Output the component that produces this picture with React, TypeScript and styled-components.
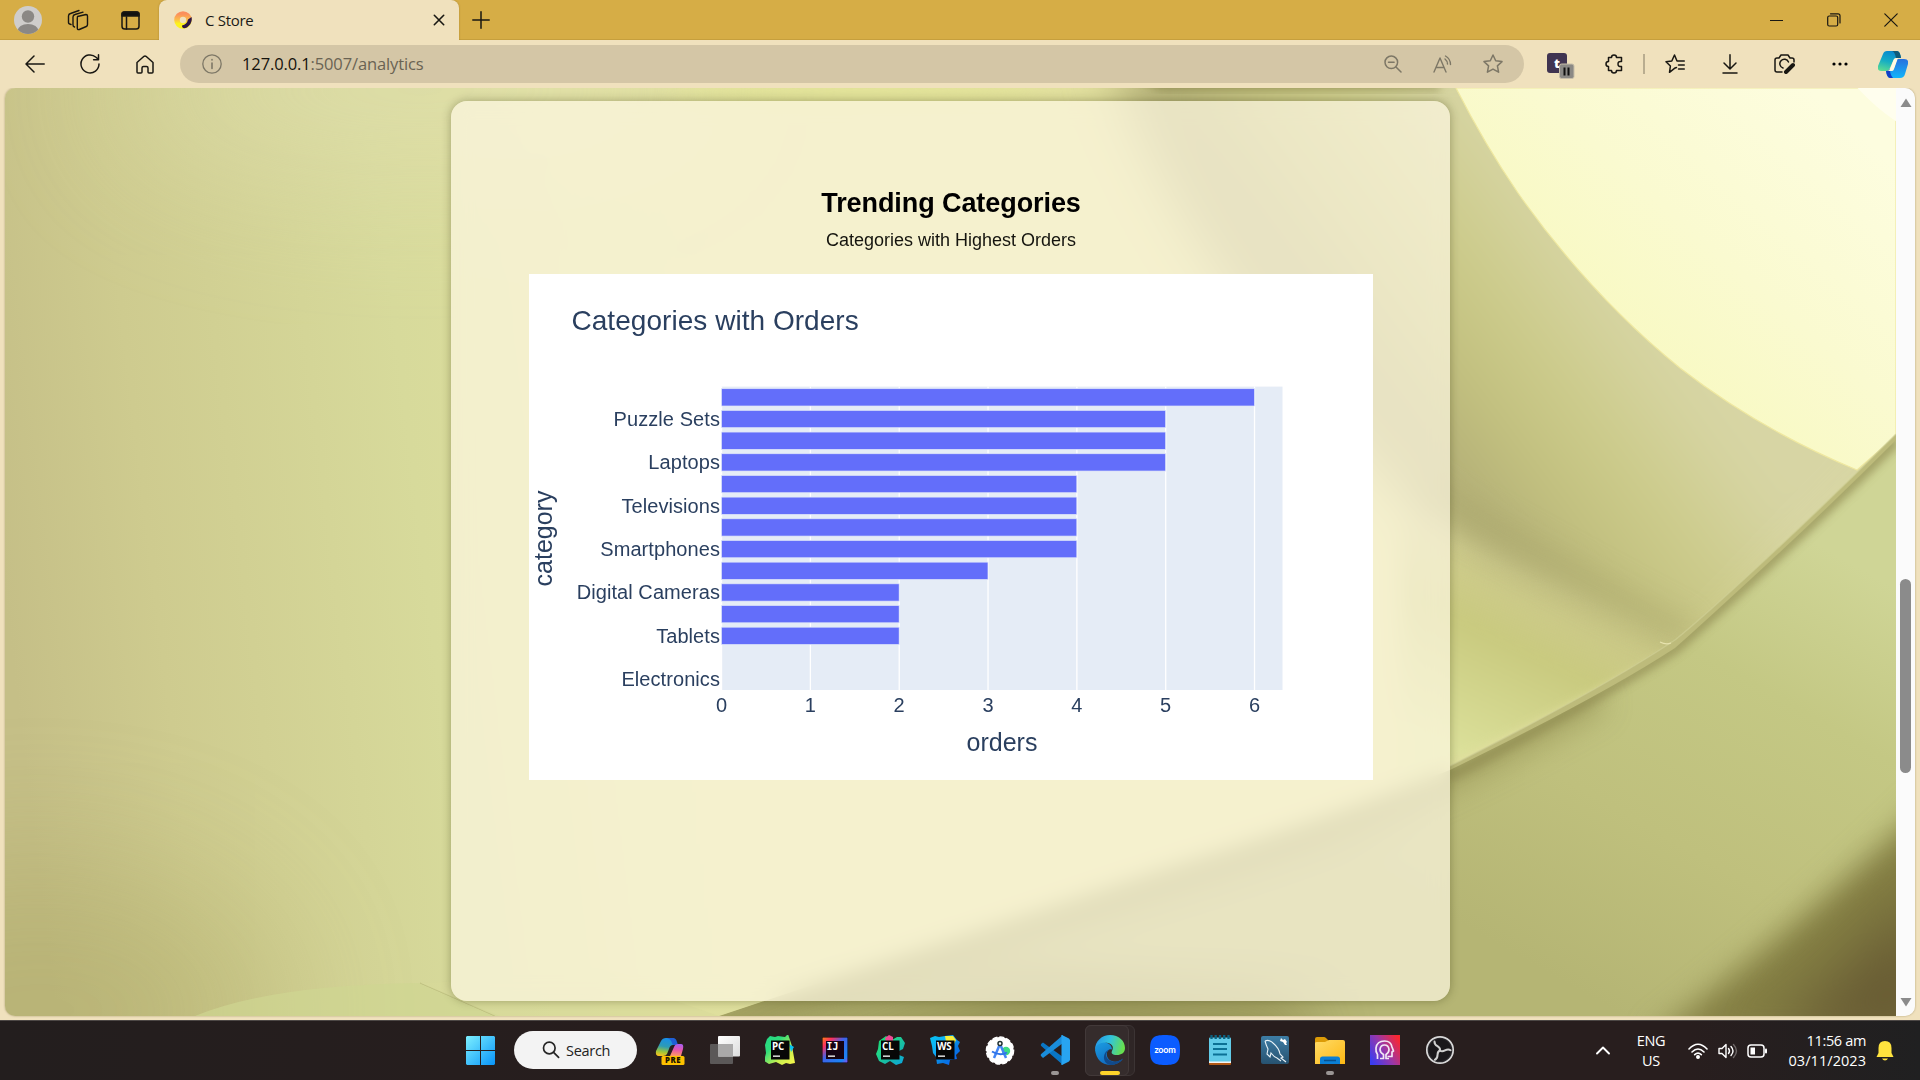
import React from "react";
import styled, { createGlobalStyle } from "styled-components";

const GlobalStyle = createGlobalStyle`
  * { box-sizing: border-box; }
  html, body { margin: 0; padding: 0; overflow: hidden; }
  body { font-family: "Open Sans", "Noto Sans", sans-serif; color: #1b1a17; }
  svg { display: block; flex: none; }
`;

const Desktop = styled.div`
  width: 1920px;
  height: 1080px;
  display: grid;
  grid-template-rows: 1020px 60px;
`;

const Browser = styled.div`
  display: grid;
  grid-template-rows: 40px 48px 928px 4px;
  background: #f0e1bd;
`;

const TitleBar = styled.div`
  display: flex;
  background: #d6ad46;
  box-shadow: inset 0 -1px 0 #c69f3d;
`;

const Slot = styled.div<{ $w: number; $shift?: number }>`
  width: ${(p) => p.$w}px;
  flex: none;
  display: flex;
  align-items: center;
  justify-content: center;
  padding-left: ${(p) => p.$shift ?? 0}px;
`;

const Tab = styled.div`
  width: 300px;
  margin-left: 1px;
  height: 40px;
  display: flex;
  align-items: center;
  padding: 0 14px 0 15px;
  border-radius: 8px 8px 0 0;
  background: #f0e1bd;
  box-shadow: 0 0 2px rgba(100, 70, 0, 0.4);
`;

const TabTitle = styled.span`
  flex: 1;
  margin-left: 13px;
  font-size: 15px;
  letter-spacing: -0.3px;
  line-height: 38px;
`;

const Spacer = styled.div`
  flex: 1;
`;

const ToolBar = styled.div`
  display: flex;
  align-items: stretch;
  padding: 0 0 0 7.5px;
  background: #f0e1bd;
  position: relative;
  z-index: 1;
`;

const AddressBar = styled.div`
  width: 1344px;
  height: 38px;
  margin: 5px 9px 0 7.5px;
  padding: 0 6.5px 0 21.5px;
  display: flex;
  align-items: stretch;
  border-radius: 19px;
  background: #d4c6a6;
`;

const Url = styled.span`
  flex: 1;
  margin-left: 19.5px;
  font-size: 16.5px;
  letter-spacing: -0.12px;
  line-height: 37px;
  color: #6a6353;
  b { font-weight: 400; color: #14120c; }
`;

const Divider = styled.div`
  width: 2px;
  height: 20px;
  margin: 14px 2.2px 0;
  background: #b9ad90;
`;

const Viewport = styled.main`
  margin: 0 5px;
  display: grid;
  grid-template-columns: 1891px 19px;
  border-radius: 10px;
  overflow: hidden;
  box-shadow: 0 0 2px rgba(90, 75, 30, 0.5);
`;

const Page = styled.div`
  display: grid;
  overflow: hidden;
  & > * { grid-area: 1 / 1; }
`;

const Card = styled.section`
  width: 999px;
  height: 900px;
  margin: 13px 0 0 446px;
  padding: 86px 77px 0 78px;
  border-radius: 16px;
  background: rgba(254, 248, 227, 0.7);
  backdrop-filter: blur(10px);
  box-shadow: 0 0 10px rgba(50, 50, 10, 0.36);
  display: flex;
  flex-direction: column;
  align-items: center;
  font-family: "Liberation Sans", Arial, sans-serif;
  color: #000;
`;

const Heading = styled.h2`
  margin: 0;
  font-size: 27px;
  letter-spacing: -0.08px;
  line-height: 32px;
  font-weight: 700;
`;

const SubHeading = styled.p`
  margin: 10px 0 0;
  font-size: 18px;
  line-height: 22px;
  color: #14140e;
`;

const ChartBox = styled.div`
  width: 844px;
  height: 506px;
  margin-top: 23px;
  background: #fff;
`;

const ScrollBar = styled.div`
  display: flex;
  flex-direction: column;
  align-items: center;
  background: #fbfbfb;
  padding: 10px 0 9px;
`;

const Thumb = styled.div`
  width: 11px;
  height: 194px;
  border-radius: 6px;
  background: #8b8b8b;
  margin: 471px 0 auto;
`;

const TaskBar = styled.footer`
  display: flex;
  align-items: stretch;
  padding-left: 454px;
  background: linear-gradient(90deg, #231e1e, #281e1e 40%, #281e1e 88%, #202021);
  border-top: 1px solid #4d4846;
`;

const SearchPill = styled.div`
  width: 123px;
  height: 38px;
  margin: 10px 5.5px 0 7px;
  padding-left: 28px;
  display: flex;
  align-items: center;
  gap: 6px;
  border-radius: 19px;
  background: #f3f3f3;
  font-size: 14.5px;
  letter-spacing: -0.3px;
  color: #222;
`;

const Launcher = styled.div<{ $mark?: "open" | "active" }>`
  width: 55px;
  display: flex;
  flex-direction: column;
  align-items: center;
  padding-top: 14px;
  &::after {
    content: "";
    width: ${(p) => (p.$mark === "active" ? 20 : 8)}px;
    height: 4px;
    margin-top: 6px;
    border-radius: 2px;
    background: ${(p) => (p.$mark === "active" ? "#ffd42a" : p.$mark ? "#9a9594" : "transparent")};
  }
`;

const ActiveTile = styled.div`
  width: 50px;
  height: 51px;
  margin: 4px 0 0 2.5px;
  border-radius: 6px;
  background: #2f2626;
  border: 1px solid #3c3434;
  & > div {
    width: 44px;
    height: 51px;
    margin: -1px 0 0 -1px;
    padding: 9px 0 0 6px;
    border-radius: 6px;
    border: 1px solid #423939;
    background: #352c2c;
  }
`;

const Tray = styled.div`
  margin-left: auto;
  display: flex;
  align-items: center;
  padding: 0 26px 0 0;
  color: #fff;
  font-size: 14.5px;
  line-height: 20px;
  letter-spacing: -0.35px;
`;

const Lang = styled.div`
  width: 34px;
  margin: 0 20px 0 24px;
  text-align: center;
`;

const Clock = styled.div`
  width: 82px;
  margin: 0 10px 0 16px;
  text-align: right;
  white-space: nowrap;
`;

const DateLine = styled.div`
  letter-spacing: 0.05px;
`;

const Status = styled.div`
  display: flex;
  gap: 9.5px;
`;

const Stroke = styled.svg<{ $c?: string; $sw?: number }>`
  fill: none;
  stroke: ${(p) => p.$c ?? "#191712"};
  stroke-width: ${(p) => p.$sw ?? 1.5};
  stroke-linecap: round;
  stroke-linejoin: round;
`;

const grey = "#7d7766";
const STAR = "M10 1l2.7 5.8 6.3.8-4.6 4.3 1.2 6.3L10 15.1l-5.6 3.1 1.2-6.3L1 7.600l6.3-.8z";

function Backdrop() {
  return (
    <svg width="1891" height="928" viewBox="5 88 1891 928">
      <defs>
        <linearGradient id="base" gradientUnits="userSpaceOnUse" x1="5" y1="600" x2="1000" y2="480">
          <stop offset="0" stopColor="#c5bf87" />
          <stop offset=".15" stopColor="#cecb8f" />
          <stop offset=".42" stopColor="#d7da9b" />
          <stop offset=".6" stopColor="#dedf9d" />
          <stop offset="1" stopColor="#e1df9e" />
        </linearGradient>
        <linearGradient id="fold" gradientUnits="userSpaceOnUse" x1="1290" y1="270" x2="1490" y2="120">
          <stop offset="0" stopColor="#b3af77" />
          <stop offset=".3" stopColor="#c2c07f" />
          <stop offset=".6" stopColor="#cccb8b" />
          <stop offset="1" stopColor="#d7d5a4" />
        </linearGradient>
        <linearGradient id="sun" gradientUnits="userSpaceOnUse" x1="1580" y1="330" x2="1800" y2="80">
          <stop offset="0" stopColor="#f8f9c1" />
          <stop offset=".45" stopColor="#fafad0" />
          <stop offset="1" stopColor="#fdfddf" />
        </linearGradient>
        <linearGradient id="low" gradientUnits="userSpaceOnUse" x1="1810" y1="540" x2="1560" y2="980">
          <stop offset="0" stopColor="#cfd596" />
          <stop offset=".3" stopColor="#c4c884" />
          <stop offset=".65" stopColor="#bfc07d" />
          <stop offset="1" stopColor="#b5b574" />
        </linearGradient>
        <linearGradient id="patch" gradientUnits="userSpaceOnUse" x1="1560" y1="580" x2="1475" y2="760">
          <stop offset="0" stopColor="#b3b06f" stopOpacity="0" />
          <stop offset=".4" stopColor="#c9ca7f" />
          <stop offset="1" stopColor="#dbe09a" />
        </linearGradient>
        <filter id="b4" x="-20%" y="-20%" width="140%" height="140%" colorInterpolationFilters="sRGB"><feGaussianBlur stdDeviation="4" /></filter>
        <filter id="b12" x="-30%" y="-30%" width="160%" height="160%" colorInterpolationFilters="sRGB"><feGaussianBlur stdDeviation="15" /></filter>
        <filter id="b24" x="-30%" y="-30%" width="160%" height="160%" colorInterpolationFilters="sRGB"><feGaussianBlur stdDeviation="24" /></filter>
        <filter id="b30" x="-40%" y="-40%" width="180%" height="180%" colorInterpolationFilters="sRGB"><feGaussianBlur stdDeviation="32" /></filter>
        <filter id="b60" x="-80%" y="-80%" width="260%" height="260%" colorInterpolationFilters="sRGB"><feGaussianBlur stdDeviation="70" /></filter>
        <clipPath id="below"><path d="M1896 440 Q1830 506 1765 566 T1675 648 Q1600 697 1450 770 Q1320 820 1180 863 L719 1016 H1896Z" /></clipPath>
      </defs>
      <rect x="5" y="88" width="1891" height="928" fill="url(#base)" />
      <ellipse cx="40" cy="1010" rx="240" ry="150" fill="#a39f5a" opacity=".35" filter="url(#b60)" />
      <ellipse cx="420" cy="90" rx="300" ry="90" fill="#e3e0b4" opacity=".5" filter="url(#b60)" />
      <ellipse cx="860" cy="86" rx="190" ry="20" fill="#e3e596" opacity=".7" filter="url(#b12)" />
      <path d="M1106 40 C1144 180 1230 300 1325 410 Q1400 510 1480 560 L1700 680 L1940 430 V40Z" fill="url(#fold)" filter="url(#b24)" />
      <path d="M1115 70 H1240 L1440 84 V90 H1160Z" fill="#7d7a40" opacity=".6" filter="url(#b4)" />
      <path d="M1420 490 Q1550 565 1690 638" fill="none" stroke="#98955b" strokeWidth="26" opacity=".36" filter="url(#b12)" />
      <path d="M1400 520 Q1540 590 1675 644 Q1590 700 1400 785Z" fill="url(#patch)" filter="url(#b4)" />
      <path d="M1456 88 Q1485 145 1518 193 Q1590 295 1680 368 Q1760 430 1857 470 L1896 436 V88Z" fill="url(#sun)" stroke="#efe8a0" strokeWidth="1.2" />
      <path d="M1854 84 Q1875 108 1900 124 V84Z" fill="#fffeee" />
      <path d="M1896 434 Q1830 500 1765 560 T1675 640 Q1600 690 1450 766 L1450 778 Q1600 716 1675 656 L1896 448Z" fill="#bdbb7b" />
      <g clipPath="url(#below)">
        <path d="M1896 440 Q1830 506 1765 566 T1675 648 Q1600 697 1450 770 Q1320 820 1180 863 L719 1016 H1896Z" fill="url(#low)" />
        <path d="M1896 440 Q1830 506 1765 566 T1675 648 Q1600 697 1450 776" fill="none" stroke="#98945a" strokeWidth="12" opacity=".8" filter="url(#b4)" />
        <path d="M1600 696 Q1500 752 1420 788 Q1320 834 1180 877 L700 1030" fill="none" stroke="#8d894c" strokeWidth="26" opacity=".6" filter="url(#b12)" />
        <path d="M680 1044 L1040 984 L1300 1005 L1320 1060Z" fill="#7a743a" opacity=".65" filter="url(#b30)" />
        <path d="M1930 800 Q1820 910 1650 1040 H1940Z" fill="#858044" filter="url(#b12)" />
        <path d="M1930 880 Q1860 950 1760 1050 H1950Z" fill="#675a33" filter="url(#b30)" />
      </g>
      <path d="M1896 434 Q1830 500 1765 560 T1675 640 Q1600 690 1450 766" fill="none" stroke="#d1d097" strokeWidth="1.5" opacity=".6" />
      <path d="M1660 642 q6 3 11 1" stroke="#e7e3ae" strokeWidth="1.2" fill="none" />
      <path d="M195 1016 Q270 985 420 983 L500 1016Z" fill="#cfd692" opacity=".7" />
      <path d="M420 983 Q450 996 495 1016" stroke="#babb7c" strokeWidth="1" fill="none" />
      <path d="M420 983 L600 975 L719 1016 H495Z" fill="#d8da9a" opacity=".5" />
    </svg>
  );
}

const orders = [6, 5, 5, 5, 4, 4, 4, 4, 3, 2, 2, 2, 0, 0];
const labels: Record<number, string> = {
  1: "Puzzle Sets", 3: "Laptops", 5: "Televisions", 7: "Smartphones", 9: "Digital Cameras", 11: "Tablets", 13: "Electronics",
};

function Chart() {
  const x0 = 192.5, step = 88.83, row = 21.68, top = 112.6;
  return (
    <svg width="844" height="506" fontFamily='"Liberation Sans", Arial, sans-serif' fill="#2a3f5f">
      <text x="42.5" y="56" fontSize="28" letterSpacing=".04">Categories with Orders</text>
      <rect x="192.5" y={top} width="561" height="303.4" fill="#e5ecf6" />
      {[0, 1, 2, 3, 4, 5, 6].map((n) => (
        <g key={n}>
          <rect x={x0 + n * step - 0.6} y={top} width="1.3" height="303.4" fill="#fff" />
          <text x={x0 + n * step} y="438" fontSize="20" textAnchor="middle">{n}</text>
        </g>
      ))}
      {orders.map((v, i) => (
        <g key={i}>
          {v > 0 && <rect x={x0} y={top + row * i + 2.1} width={v * step} height="17.3" fill="#636efa" stroke="#dfe6fa" strokeWidth=".7" />}
          {labels[i] && <text x="191" y={top + row * (i + 0.5) + 6.9} fontSize="20" letterSpacing=".07" textAnchor="end">{labels[i]}</text>}
        </g>
      ))}
      <text x="473" y="476.5" fontSize="25" textAnchor="middle">orders</text>
      <text transform="translate(23 264.5) rotate(-90)" fontSize="25" textAnchor="middle">category</text>
    </svg>
  );
}

/* JetBrains style tile: a coloured splash behind a black square with two letters */
function JetIcon({ id, text, colors, blob }: { id: string; text: string; colors: string[]; blob: string }) {
  return (
    <svg width="30" height="30" viewBox="0 0 30 30">
      <defs>
        <linearGradient id={id} x1="0" y1="0" x2="1" y2="1">
          {colors.map((c, i) => <stop key={i} offset={i / (colors.length - 1)} stopColor={c} />)}
        </linearGradient>
      </defs>
      <path d={blob} fill={`url(#${id})`} />
      {id === "cl" && <path d="M10 3l4-3 4 2 0 5-7 0z" fill="#ef4a93" />}
      {id === "pc" && <path d="M24 9l5 3-3 5z" fill="#07c3f2" />}
      {id === "ws" && <path d="M15 1l8 0 3 4-2 4-8-2z" fill="#f9ee3b" />}
      <rect x="6" y="5.5" width="18.500" height="19" fill="#070707" />
      <text x="7" y="15" fontSize="9.800" fontWeight="700" fill="#fff" letterSpacing="-.1">{text}</text>
      <rect x="8" y="20.500" width="7" height="1.300" fill="#fff" />
    </svg>
  );
}

function Taskbar() {
  return (
    <TaskBar>
      <Slot $w={53}>
        <svg width="29" height="29" viewBox="0 0 29 29">
          <defs><linearGradient id="win" x1="0" y1="0" x2="1" y2="1"><stop offset="0" stopColor="#7df0ff" /><stop offset="1" stopColor="#0894f8" /></linearGradient></defs>
          <path fill="url(#win)" d="M1 0h13v14H0V1zM15 0h13l1 1v13H15zM0 15h14v14H1l-1-1zM15 15h14v13l-1 1H15z" />
        </svg>
      </Slot>
      <SearchPill>
        <Stroke width="18" height="18" viewBox="0 0 18 18" $c="#252525" $sw={1.7}><circle cx="7.3" cy="7" r="5.8" /><path d="M11.6 11.4l5 5" /></Stroke>
        Search
      </SearchPill>
      <Launcher>
        <svg width="30" height="30" viewBox="0 0 30 30" overflow="visible">
          <defs>
            <linearGradient id="ca" x1="0.4" y1="0" x2=".2" y2="1"><stop offset="0" stopColor="#188fe8" /><stop offset=".45" stopColor="#2d9bb5" /><stop offset=".75" stopColor="#9cc53a" /><stop offset="1" stopColor="#ffc21c" /></linearGradient>
            <linearGradient id="cb" x1=".5" y1="0" x2=".4" y2="1"><stop offset="0" stopColor="#a95cf0" /><stop offset=".5" stopColor="#e957a8" /><stop offset="1" stopColor="#ff9c61" /></linearGradient>
          </defs>
          <path d="M6 6q1.500-3 5-3h6q3 0 4 4l1 3h-4q-3 0-4 4l-2 5q-1 2-4 2H4q-4 0-3-5z" fill="url(#ca)" />
          <path d="M12 3h6q3 0 4 4l1 3h-4q-2 0-2-2-1-4-5-5z" fill="#1f5fd5" />
          <path d="M19 12q1-3 4-3h3q3 0 2 5l-2 7H15z" fill="url(#cb)" />
          <rect x="6.500" y="21" width="23" height="9" rx="1.500" fill="#fdc100" />
          <text x="18.100" y="28.200" fontSize="7.800" fontWeight="800" textAnchor="middle" fill="#1a1300" letterSpacing=".6">PRE</text>
        </svg>
      </Launcher>
      <Launcher>
        <svg width="30" height="30" viewBox="0 0 30 30">
          <defs><linearGradient id="tv" x1="0" y1="0" x2="1" y2="1"><stop offset="0" stopColor="#fff" /><stop offset="1" stopColor="#dcdcdc" /></linearGradient></defs>
          <rect x="0" y="9" width="23" height="20" rx="1" fill="#5b5858" />
          <rect x="8" y="1" width="22" height="20.500" rx="1" fill="url(#tv)" />
          <path d="M8 9h15v12.500H8z" fill="#aaa9a9" />
        </svg>
      </Launcher>
      <Launcher><JetIcon id="pc" text="PC" colors={["#21d789", "#2fdc7a", "#c9f04f", "#fcf84a"]} blob="M0 10l2-6 3-3 5 1 3-1 7 1 3-3 2 6 2 6 3 17-5 1-4-1-4 2-6-3-7 2-5-3 2-8z" /></Launcher>
      <Launcher>
        <svg width="30" height="30" viewBox="0 0 30 30">
          <defs><linearGradient id="ij" x1="0" y1="0" x2="1" y2="1"><stop offset="0" stopColor="#fc801d" /><stop offset=".2" stopColor="#fe315d" /><stop offset=".45" stopColor="#3f63e8" /><stop offset=".85" stopColor="#1a84f5" /><stop offset="1" stopColor="#8a4cf0" /></linearGradient></defs>
          <rect x="2" y="2" width="26" height="26" fill="#000" />
          <rect x="2.500" y="2.500" width="25" height="25" fill="url(#ij)" />
          <rect x="6" y="6" width="18" height="18" fill="#150314" />
          <text x="6.500" y="15" fontSize="9.800" fontWeight="700" fill="#fff" fontFamily="DejaVu Sans Mono, monospace">IJ</text>
          <rect x="8" y="20.500" width="7" height="1.300" fill="#fff" />
        </svg>
      </Launcher>
      <Launcher><JetIcon id="cl" text="CL" colors={["#12d66c", "#21d789", "#15b6ac", "#0aa5e8"]} blob="M4 6l7-5 6 4 5-3 4 0 4 6-2 6-4 2 0 4 5 2-2 6-6 2-6-4-5 3-6-3-3-7 2-5z" /></Launcher>
      <Launcher><JetIcon id="ws" text="WS" colors={["#07c3f2", "#0fb0f5", "#0877e0", "#0a5cff"]} blob="M0 3l5-2 4 1 6-1 8-1 4 5 3 2-2 4 2 5-4 4 1 4-7 1-1 5-6-2-6 1-1-7-3-4-1-7z" /></Launcher>
      <Launcher>
        <svg width="30" height="30" viewBox="0 0 30 30">
          <circle cx="15" cy="15.500" r="13.600" fill="#fff" stroke="#fff" strokeWidth="1.400" strokeDasharray="5 2" />
          <circle cx="21" cy="16" r="4.200" fill="#3ddc84" />
          <path d="M15 9L9 23M15 9l6 14" stroke="#4285f4" strokeWidth="2.500" fill="none" />
          <path d="M7 16.500q8 5 15 1" stroke="#3074e8" strokeWidth="2" fill="none" />
          <circle cx="15" cy="8.500" r="2" fill="#fff" stroke="#233" strokeWidth="1.500" />
        </svg>
      </Launcher>
      <Launcher $mark="open">
        <svg width="30" height="30" viewBox="0 0 30 30">
          <path d="M1 9l2-1.500L23 22v8L1.200 11q-1-1 0-2z" fill="#0a76c4" />
          <path d="M1 21l2 2L23 8V0L1.200 19q-1 1-.2 2z" fill="#1a8ddb" />
          <path d="M22 0l7 3.500 1 1.500v20l-1 1.500-7 3.500q-1.500 0-.5-2V2q-1-2 .5-2z" fill="#28a4f1" />
        </svg>
      </Launcher>
      <ActiveTile>
        <Launcher $mark="active">
          <svg width="30" height="30" viewBox="0 0 30 30">
            <defs>
              <linearGradient id="e1" x1="0" y1=".2" x2="1" y2=".4"><stop offset="0" stopColor="#2494e8" /><stop offset=".5" stopColor="#32c3dc" /><stop offset="1" stopColor="#68e04c" /></linearGradient>
              <linearGradient id="e2" x1="0" y1="0" x2=".6" y2="1"><stop offset="0" stopColor="#1b9de2" /><stop offset="1" stopColor="#1067bd" /></linearGradient>
            </defs>
            <path d="M0 15C0 6 7 0 15 0c9 0 15 6 15 13 0 5-4 7-8 7-5 0-6-2-5-4 3-5-2-9-7-8Q2 9 0 15z" fill="url(#e1)" />
            <path d="M0 15Q1 8 9 7.500c6 0 8 4 8 7-5-2-7 6-3 10 4 3 9 3 14-1Q24 30 15 30 2 29 0 15z" fill="url(#e2)" />
            <path d="M17 14.500c-6 0-8 7-3 10.500 4 3 9 2 14-1.500-2 4-8 6.500-12 6.500C6 29 7 14 17 14.500z" fill="#114a8b" />
          </svg>
        </Launcher>
      </ActiveTile>
      <Slot $w={2.5} />
      <Launcher>
        <svg width="30" height="30" viewBox="0 0 30 30">
          <path d="M15 0c12 0 15 3 15 15s-3 15-15 15S0 27 0 15 3 0 15 0z" fill="#0b5cff" />
          <text x="15" y="17.600" fontSize="9" fontWeight="700" textAnchor="middle" fill="#fff" letterSpacing="-.2" fontFamily="Lato, sans-serif">zoom</text>
        </svg>
      </Launcher>
      <Launcher>
        <svg width="30" height="30" viewBox="0 0 30 30">
          <rect x="4" y="25" width="22" height="5" rx="1" fill="#b45a16" /><rect x="4" y="24" width="22" height="4" fill="#f4f4f4" />
          <rect x="4" y="2.500" width="22" height="24" rx="1" fill="#61cbe8" />
          <path d="M6.500 0v4m4.200-4v4M15 0v4m4.200-4v4m4.300-4v4" stroke="#0b6281" strokeWidth="2.300" />
          <path d="M8 9h14M8 14h14M8 19.500h14" stroke="#0b7195" strokeWidth="2" />
        </svg>
      </Launcher>
      <Launcher>
        <svg width="30" height="30" viewBox="0 0 30 30">
          <defs><linearGradient id="my" x1="0" y1="0" x2="0" y2="1"><stop offset="0" stopColor="#3d7da5" /><stop offset="1" stopColor="#275270" /></linearGradient></defs>
          <rect x="1" y="1" width="28" height="28" rx="2" fill="url(#my)" />
          <path d="M5 6q4-2 8 2 6 5 7 11l3 3-2 1 5 4M5 6q1 4 3 8l-1 5 3 3 1-4q3 4 6 5l4 3" fill="none" stroke="#e8f1f6" strokeWidth="1.100" />
          <path d="M21 3l2 2 2-1 2 3-1 1 1 2-2 0-2-3-3-1z" fill="#fff" />
        </svg>
      </Launcher>
      <Launcher $mark="open">
        <svg width="30" height="30" viewBox="0 0 30 30">
          <defs><linearGradient id="fo" x1="0" y1="0" x2="1" y2="1"><stop offset="0" stopColor="#ffdb67" /><stop offset="1" stopColor="#fdb813" /></linearGradient></defs>
          <path d="M0 4q0-2 2-2h7q1 0 2 1l3 3v6H0z" fill="#dc9b07" />
          <path d="M0 8q0-1 2-1h8l4-2h14q2 0 2 2v22H0z" fill="url(#fo)" />
          <path d="M5 29v-5q0-2.500 2.500-2.500h15Q25 21.500 25 24v5z" fill="#0b7fd5" /><path d="M9 25.500h12" stroke="#07508f" strokeWidth="1.500" />
        </svg>
      </Launcher>
      <Launcher>
        <svg width="30" height="30" viewBox="0 0 30 30">
          <defs><linearGradient id="pk" x1="0" y1=".8" x2="1" y2=".2"><stop offset="0" stopColor="#3b3cf0" /><stop offset=".5" stopColor="#9a37a8" /><stop offset="1" stopColor="#fa2730" /></linearGradient></defs>
          <rect width="30" height="30" fill="url(#pk)" />
          <g fill="none" stroke="#f2e7f5" strokeWidth="1.700" strokeLinejoin="round">
            <path d="M7.500 24v-4.500Q5.500 17 6 13q1-7 8.500-7 6.500 0 7.500 6l1.500 4-1.500 1v4.500h-4.500" />
            <path d="M10 23.500h3.500v-4q-3.500-2-3.500-5 .5-4.500 4.500-4.500T19 14.500q0 3-3 5v4h3" />
          </g>
        </svg>
      </Launcher>
      <Launcher>
        <svg width="30" height="30" viewBox="0 0 30 30">
          <circle cx="15" cy="15" r="13.200" fill="#29272b" stroke="#d9d9d9" strokeWidth="1.700" />
          <circle cx="15" cy="15" r="11" fill="#1a181b" />
          <g fill="none" stroke="#cfcfcf" strokeWidth="2" strokeLinecap="round">
            <path d="M15 15.500c1-5-6-3.500-5.500-9" />
            <path d="M15 15.500c1-5-6-3.500-5.500-9" transform="rotate(120 15 15.500)" />
            <path d="M15 15.500c1-5-6-3.500-5.500-9" transform="rotate(240 15 15.500)" />
          </g>
        </svg>
      </Launcher>
      <Tray>
        <Stroke width="14" height="9" viewBox="0 0 14 9" $c="#fff" $sw={1.9}><path d="M1 7.500l6-6 6 6" /></Stroke>
        <Lang>ENG<br />US</Lang>
        <Status>
          <Stroke width="20" height="16" viewBox="0 0 20 16" $c="#fff" $sw={1.6}>
            <path d="M1 6q9-9.500 18 0M4 9q6-6 12 0M6.700 11.700q3.300-3 6.600 0" /><circle cx="10" cy="14" r="1.200" fill="#fff" />
          </Stroke>
          <Stroke width="20" height="16" viewBox="0 0 20 16" $c="#fff" $sw={1.4}>
            <path d="M1 5.500h3l4-4v13l-4-4H1zM10.500 5.500q2 2.500 0 5M13 3.500q4 4.500 0 9" /><path d="M15.500 1.500q6 6.500 0 13" stroke="#6d6666" />
          </Stroke>
          <Stroke width="21" height="16" viewBox="0 0 21 16" $c="#fff" $sw={1.5}>
            <rect x="1" y="2" width="16" height="12" rx="3" /><rect x="3.500" y="4.500" width="4.500" height="7" fill="#fff" stroke="none" /><path d="M19 6.500v3" strokeWidth="2" />
          </Stroke>
        </Status>
        <Clock>11:56 am<DateLine>03/11/2023</DateLine></Clock>
        <svg width="18" height="20" viewBox="0 0 18 20"><path d="M9 0q6.500 0 6.500 7v5l2 4H.5l2-4V7Q2.500 0 9 0zM6 17.500h6q-1 2-3 2t-3-2z" fill="#ffe33e" /></svg>
      </Tray>
    </TaskBar>
  );
}

export default function App() {
  return (
    <Desktop>
      <GlobalStyle />
      <Browser>
        <TitleBar>
          <Slot $w={56}>
            <svg width="28" height="28" viewBox="0 0 28 28">
              <clipPath id="av"><circle cx="14" cy="14" r="14" /></clipPath>
              <g clipPath="url(#av)"><rect width="28" height="28" fill="#cfcdcb" /><circle cx="14" cy="10.500" r="6.200" fill="#8b8885" /><ellipse cx="14" cy="25" rx="10.500" ry="7" fill="#8b8885" /></g>
            </svg>
          </Slot>
          <Slot $w={43}>
            <Stroke width="22" height="22" viewBox="0 0 22 22" $sw={1.4}>
              <path d="M10.500 7.500l8.500-2q1.500 0 1.500 1.500v8.500q0 1.500-1.200 2l-7 3q-2 .5-2-1.500V9z" />
              <path d="M7.500 18q-1.500-.5-1.500-2V8q0-2 2-2.500l8-2.300M4 15.500q-2.500-.5-2.500-2V7q0-2 2-2.500L12 1.500" />
            </Stroke>
          </Slot>
          <Slot $w={59} $shift={3}>
            <Stroke width="19" height="19" viewBox="0 0 19 19" $sw={1.5}>
              <rect x="1" y="1" width="17" height="17" rx="2.800" /><path d="M1 5V3q0-2 2-2h13q2 0 2 2v2z" fill="#111" /><path d="M5.500 6v12" />
            </Stroke>
          </Slot>
          <Tab>
            <svg width="18" height="18" viewBox="0 0 18 18">
              <defs><linearGradient id="fav" x1="0" y1="0" x2="0" y2="1"><stop offset="0" stopColor="#fb8f5c" /><stop offset=".45" stopColor="#fdbb4a" /><stop offset=".8" stopColor="#fdf31c" /></linearGradient></defs>
              <circle cx="9" cy="9" r="6" fill="none" stroke="url(#fav)" strokeWidth="5.600" />
              <path d="M17.500 6Q19 12 13 16.500q-5 2-5-2 5-1 6-6z" fill="#2d1746" />
            </svg>
            <TabTitle>C Store</TabTitle>
            <Stroke width="12" height="12" viewBox="0 0 12 12" $sw={1.6}><path d="M1.300 1.300l9.400 9.400M10.700 1.300l-9.400 9.400" /></Stroke>
          </Tab>
          <Slot $w={43}><Stroke width="18" height="18" viewBox="0 0 18 18"><path d="M9 .8v16.400M.8 9h16.400" /></Stroke></Slot>
          <Spacer />
          <Slot $w={57.5}><Stroke width="13" height="13" $sw={1.2}><path d="M.5 6.500h12" /></Stroke></Slot>
          <Slot $w={57.5}><Stroke width="14" height="14" $sw={1.2}><rect x=".7" y="3" width="10" height="10" rx="1.500" /><path d="M3.500.8H11q2 0 2 2V10" /></Stroke></Slot>
          <Slot $w={57.5}><Stroke width="14" height="14" $sw={1.2}><path d="M.8.8l12.400 12.400M13.200.8L.8 13.200" /></Stroke></Slot>
        </TitleBar>
        <ToolBar>
          <Slot $w={55}><Stroke width="20" height="18" viewBox="0 0 20 18"><path d="M19.200 9H1M9 1L1 9l8 8" /></Stroke></Slot>
          <Slot $w={55}><Stroke width="20" height="20" viewBox="0 0 20 20"><path d="M19 10a9 9 0 1 1-3-6.800L18.500 5.500M18.500.8v4.900h-4.900" /></Stroke></Slot>
          <Slot $w={55}><Stroke width="18" height="19" viewBox="0 0 18 19"><path d="M1 7.500L8 1.300q1-.8 2 0L17 7.500V17q0 1-1 1h-3q-1 0-1-1v-4q0-1.500-1.500-1.500h-3Q6 11.500 6 13v4q0 1-1 1H2q-1 0-1-1z" /></Stroke></Slot>
          <AddressBar>
            <Slot $w={21}><Stroke width="20" height="20" viewBox="0 0 20 20" $c={grey} $sw={1.3}><circle cx="10" cy="10" r="9.200" /><path d="M10 9v5.500M10 5.600v.3" strokeWidth="1.600" /></Stroke></Slot>
            <Url><b>127.0.0.1</b>:5007/analytics</Url>
            <Slot $w={50}><Stroke width="18" height="18" viewBox="0 0 18 18" $c={grey}><circle cx="7.300" cy="7.300" r="6.300" /><path d="M12 12l5 5M4.500 7.300h5.600" /></Stroke></Slot>
            <Slot $w={50}><Stroke width="20" height="18" viewBox="0 0 20 18" $c={grey} $sw={1.4}><path d="M1 17L7 3l6 14M3 12.500h8M12 4q2.500 2 2.500 5M12.500 1q5 3 5 8.500" /></Stroke></Slot>
            <Slot $w={50}><Stroke width="20" height="20" viewBox="0 0 20 20" $c={grey}><path d={STAR} /></Stroke></Slot>
          </AddressBar>
          <Slot $w={54} $shift={2}>
            <svg width="29" height="30" viewBox="0 0 29 30">
              <rect x="0" y="4" width="20" height="20" rx="3" fill="#403451" />
              <text x="10" y="18.500" fontSize="13" fontWeight="800" textAnchor="middle" fill="#fff">t</text>
              <rect x="12.500" y="15" width="14.500" height="14.500" rx="2" fill="#8b8985" stroke="#c8bfa9" /><path d="M17.500 18.500v8M21.500 18.500v8" stroke="#111" strokeWidth="2" />
            </svg>
          </Slot>
          <Slot $w={54}><Stroke width="18" height="20" viewBox="0 0 18 20"><path d="M3.500 3.500h3Q6.500 1 9 1t2.500 2.500h5v4q-3.500-.5-3.500 2.500t3.500 2.500v4h-5Q11.500 19 9 19t-2.500-2.500h-3v-4Q1 12.500 1 10t2.500-2.500z" /></Stroke></Slot>
          <Divider />
          <Slot $w={55}><Stroke width="20" height="20" viewBox="0 0 20 20"><path d="M11.500 13.500l-2 .8-5 4 .9-6.300L1 7.800 6.800 7 9.500 1 12 7h7.300M13.500 11h5.800M13.500 15h5.800" /></Stroke></Slot>
          <Slot $w={55}><Stroke width="16" height="20" viewBox="0 0 16 20"><path d="M8 .8v14M2 9l6 6 6-6M1 19h14" /></Stroke></Slot>
          <Slot $w={55}><Stroke width="21" height="20" viewBox="0 0 21 20"><path d="M8 18H3q-2 0-2-2V6q0-2 2-2h2l2-3h7l2 3h2q2 0 2 2v2M9 14a4.500 4.500 0 1 1 5.500-6" /><path d="M19 11l-7 7" strokeWidth="4" /></Stroke></Slot>
          <Slot $w={55}><svg width="16" height="4"><circle cx="2" cy="2" r="1.600" /><circle cx="8" cy="2" r="1.600" /><circle cx="14" cy="2" r="1.600" /></svg></Slot>
          <Slot $w={51}>
            <svg width="30" height="27" viewBox="0 0 30 27">
              <defs>
                <linearGradient id="k1" x1=".5" y1="0" x2=".2" y2="1"><stop offset="0" stopColor="#0989cf" /><stop offset=".5" stopColor="#16adc4" /><stop offset="1" stopColor="#5cdc92" /></linearGradient>
                <linearGradient id="k2" x1=".5" y1="0" x2=".5" y2="1"><stop offset="0" stopColor="#2870dd" /><stop offset="1" stopColor="#12b5fa" /></linearGradient>
              </defs>
              <path d="M5 3q1-3 4-3h10q3 0 4 7h-5q-2 0-3 3l-3 7q-1 3-4 3H3q-4 0-3-5z" fill="url(#k1)" />
              <path d="M14 0h5q3 0 4 7h-5q-1-6-4-7z" fill="#105b79" />
              <path d="M19 8h7q5 0 4 5l-3 10q-1 4-5 4H12q-3 0-4-7h5q2 0 3-3z" fill="url(#k2)" />
              <path d="M8 20q3 0 4-2 0 6 3 9h-3q-3 0-4-7z" fill="#123fc6" />
              <path d="M16 8q1-1 4-1l-4 11q-.5 2-2 2h-4q2-1 2.500-3z" fill="#fffbe2" />
            </svg>
          </Slot>
        </ToolBar>
        <Viewport>
          <Page>
            <Backdrop />
            <Card>
              <Heading>Trending Categories</Heading>
              <SubHeading>Categories with Highest Orders</SubHeading>
              <ChartBox><Chart /></ChartBox>
            </Card>
          </Page>
          <ScrollBar>
            <svg width="12" height="10"><path d="M6 0.500L11.500 9H.5z" fill="#8b8b8b" /></svg>
            <Thumb />
            <svg width="12" height="10"><path d="M6 9.500L11.500 1H.5z" fill="#8b8b8b" /></svg>
          </ScrollBar>
        </Viewport>
      </Browser>
      <Taskbar />
    </Desktop>
  );
}
